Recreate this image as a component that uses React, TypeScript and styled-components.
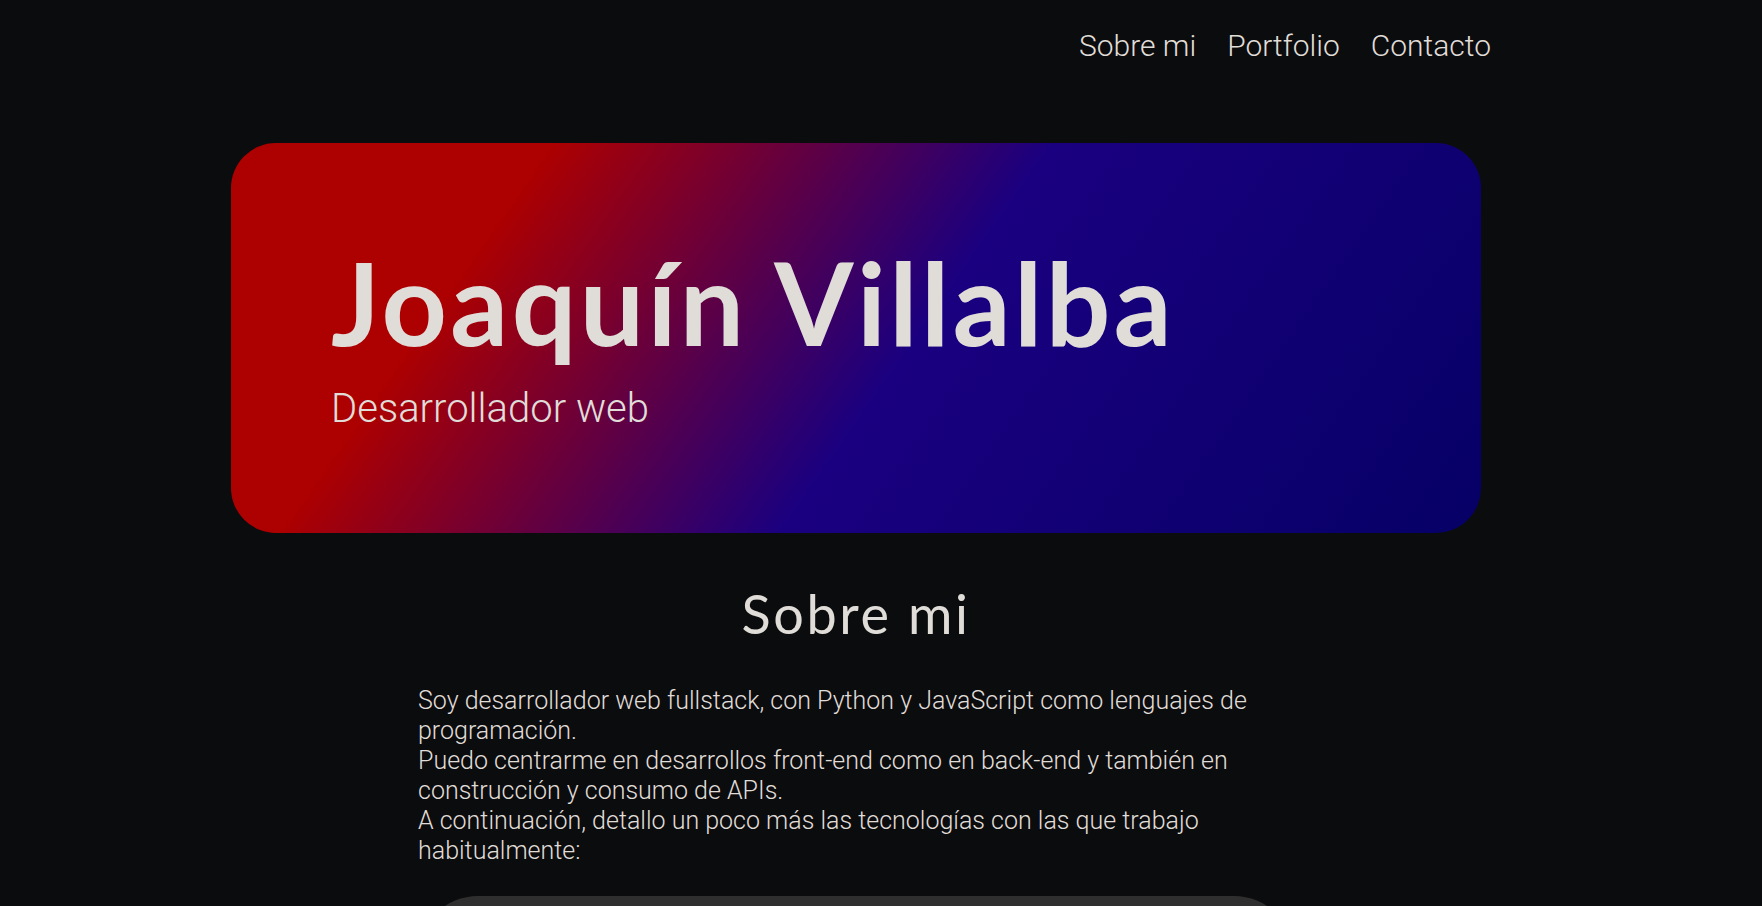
import React from "react";
import styled, { createGlobalStyle } from "styled-components";

const Global = createGlobalStyle`
  html, body { margin: 0; padding: 0; background: #0b0c0e; }
  body { font-family: Roboto, "Liberation Sans", sans-serif; color: #e0ddd8; overflow: hidden; }
  * { box-sizing: border-box; }
`;

const Page = styled.div`
  width: 1762px;
  height: 906px;
  overflow: hidden;
  background: #0b0c0e;
  display: flex;
  flex-direction: column;
  align-items: center;
  padding-right: 50px;
  & > * { flex-shrink: 0; }
`;

const Header = styled.header`
  width: 1762px;
  margin-right: -50px;
  display: flex;
  justify-content: flex-end;
  padding: 28px 271px 0 0;
  height: 143px;
`;

const NavList = styled.nav`
  display: flex;
  gap: 31px;
`;

const NavLink = styled.a`
  font-family: Roboto, "Liberation Sans", sans-serif;
  font-weight: 300;
  font-size: 30px;
  line-height: 36px;
  color: #e0ddd8;
  text-decoration: none;
`;

const Hero = styled.section`
  width: 1250px;
  height: 390px;
  border-radius: 45px;
  background: linear-gradient(125deg, #ad0000 21%, #1a0080 54%, #060066 100%);
  display: flex;
  flex-direction: column;
  justify-content: center;
  padding: 0 0 0 100px;
`;

const Title = styled.h1`
  margin: 0;
  font-family: Lato, "Noto Sans", sans-serif;
  font-weight: 700;
  font-size: 114px;
  line-height: 120px;
  color: #e0ddd8;
  letter-spacing: 3.4px;
`;

const Subtitle = styled.p`
  margin: 22px 0 0;
  font-family: Roboto, sans-serif;
  font-weight: 300;
  font-size: 40px;
  line-height: 50px;
  color: #e0ddd8;
`;

const About = styled.section`
  width: 876px;
  display: flex;
  flex-direction: column;
  align-items: center;
`;

const SectionTitle = styled.h2`
  margin: 49px 0 40px;
  font-family: Lato, "Noto Sans", sans-serif;
  font-weight: 400;
  font-size: 54px;
  line-height: 64px;
  letter-spacing: 2.6px;
  color: #e0ddd8;
`;

const Paragraph = styled.p`
  margin: 0;
  width: 100%;
  font-family: Roboto, sans-serif;
  font-weight: 300;
  font-size: 25px;
  line-height: 30px;
  color: #e0ddd8;
`;

const TechBox = styled.div`
  margin-top: 30px;
  width: 100%;
  height: 200px;
  border-radius: 60px;
  background: #2f2f2f;
`;

export default function App() {
  return (
    <>
      <Global />
      <Page>
        <Header>
          <NavList>
            <NavLink href="#sobre">Sobre mi</NavLink>
            <NavLink href="#portfolio">Portfolio</NavLink>
            <NavLink href="#contacto">Contacto</NavLink>
          </NavList>
        </Header>
        <Hero>
          <Title>Joaquín Villalba</Title>
          <Subtitle>Desarrollador web</Subtitle>
        </Hero>
        <About id="sobre">
          <SectionTitle>Sobre mi</SectionTitle>
          <Paragraph>
            Soy desarrollador web fullstack, con Python y JavaScript como lenguajes de programación.
            <br />
            Puedo centrarme en desarrollos front-end como en back-end y también en construcción y consumo de APIs.
            <br />
            A continuación, detallo un poco más las tecnologías con las que trabajo habitualmente:
          </Paragraph>
          <TechBox />
        </About>
      </Page>
    </>
  );
}
